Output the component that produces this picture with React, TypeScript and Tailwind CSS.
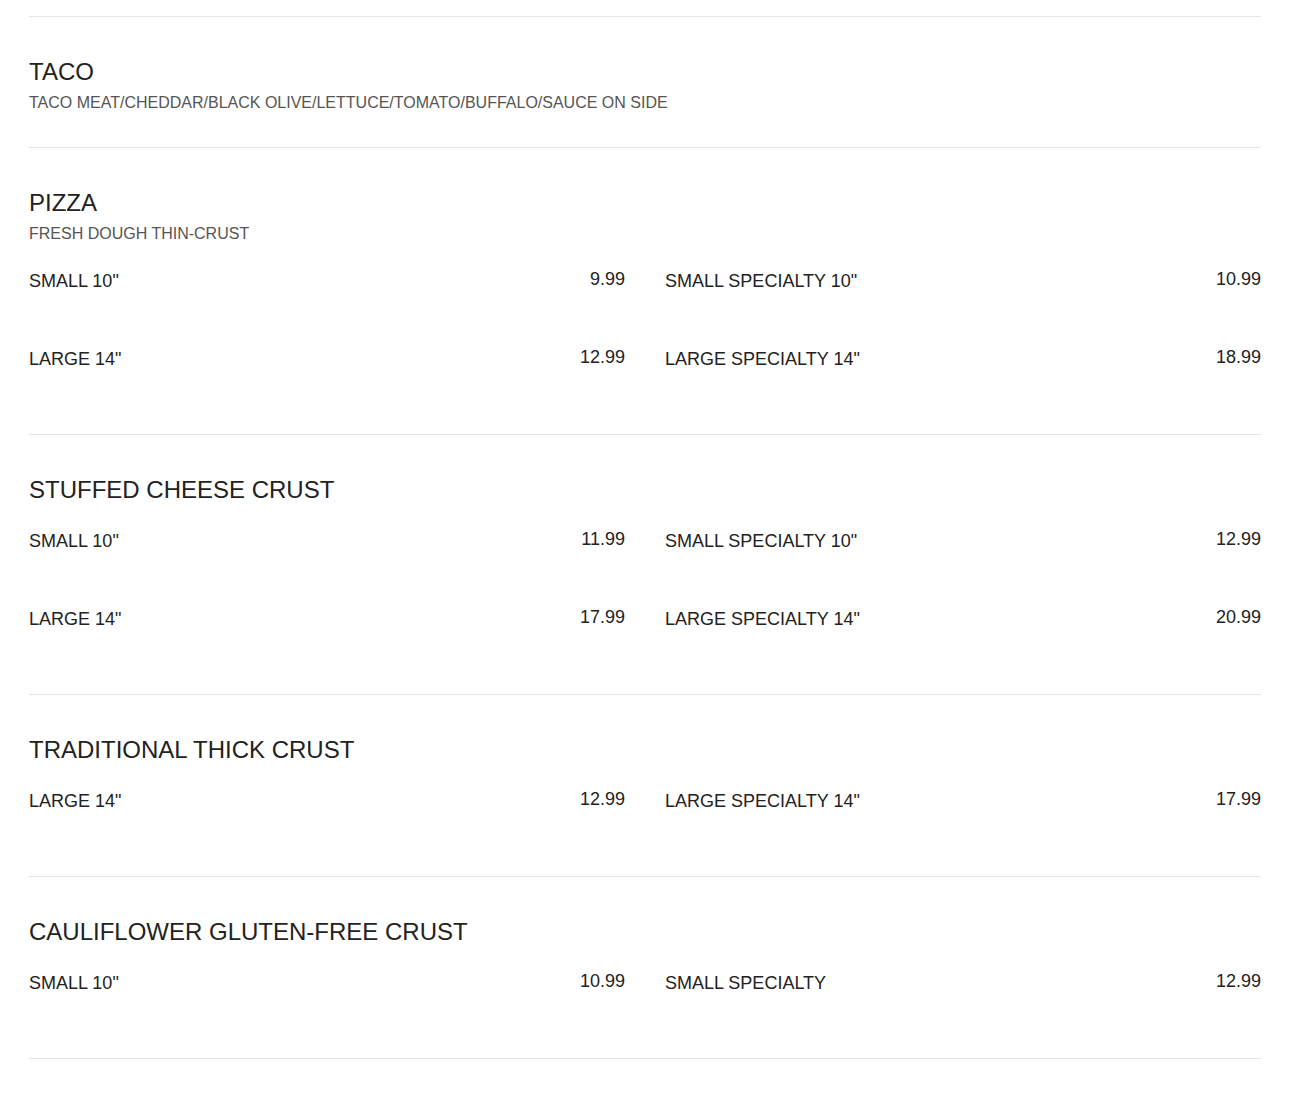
import React from 'react';

type Item = { name: string; price: string };
type Section = { title: string; description?: string; items: Item[] };

const sections: Section[] = [
  {
    title: 'TACO',
    description: 'TACO MEAT/CHEDDAR/BLACK OLIVE/LETTUCE/TOMATO/BUFFALO/SAUCE ON SIDE',
    items: [],
  },
  {
    title: 'PIZZA',
    description: 'FRESH DOUGH THIN-CRUST',
    items: [
      { name: 'SMALL 10"', price: '9.99' },
      { name: 'SMALL SPECIALTY 10"', price: '10.99' },
      { name: 'LARGE 14"', price: '12.99' },
      { name: 'LARGE SPECIALTY 14"', price: '18.99' },
    ],
  },
  {
    title: 'STUFFED CHEESE CRUST',
    items: [
      { name: 'SMALL 10"', price: '11.99' },
      { name: 'SMALL SPECIALTY 10"', price: '12.99' },
      { name: 'LARGE 14"', price: '17.99' },
      { name: 'LARGE SPECIALTY 14"', price: '20.99' },
    ],
  },
  {
    title: 'TRADITIONAL THICK CRUST',
    items: [
      { name: 'LARGE 14"', price: '12.99' },
      { name: 'LARGE SPECIALTY 14"', price: '17.99' },
    ],
  },
  {
    title: 'CAULIFLOWER GLUTEN-FREE CRUST',
    items: [
      { name: 'SMALL 10"', price: '10.99' },
      { name: 'SMALL SPECIALTY', price: '12.99' },
    ],
  },
];

const MenuItem: React.FC<{ item: Item }> = ({ item }) => (
  <div className="flex items-start justify-between h-[54px]">
    <span className="text-[18px] leading-[24px] text-[#222]">{item.name}</span>
    <span className="text-[18px] leading-[20px] text-[#222]">{item.price}</span>
  </div>
);

const MenuSection: React.FC<{ section: Section }> = ({ section }) => {
  const hasItems = section.items.length > 0;
  return (
    <div className={`border-t border-[#e6e6e6] pt-10 ${hasItems ? 'pb-[33px]' : 'pb-8'}`}>
      <h2 className="text-[24px] leading-[30px] text-[#222]">{section.title}</h2>
      {section.description && (
        <p className="mt-1 text-[16px] leading-[24px] text-[#555]">{section.description}</p>
      )}
      {hasItems && (
        <div className={`grid grid-cols-2 gap-x-10 gap-y-6 ${section.description ? 'mt-[23px]' : 'mt-6'}`}>
          {section.items.map((item, i) => (
            <MenuItem key={i} item={item} />
          ))}
        </div>
      )}
    </div>
  );
};

export default function App() {
  return (
    <div
      className="min-h-screen bg-white px-[29px] pt-4"
      style={{ fontFamily: '"Liberation Sans", Arial, sans-serif' }}
    >
      {sections.map((s) => (
        <MenuSection key={s.title} section={s} />
      ))}
      <div className="border-t border-[#e6e6e6]" />
    </div>
  );
}
